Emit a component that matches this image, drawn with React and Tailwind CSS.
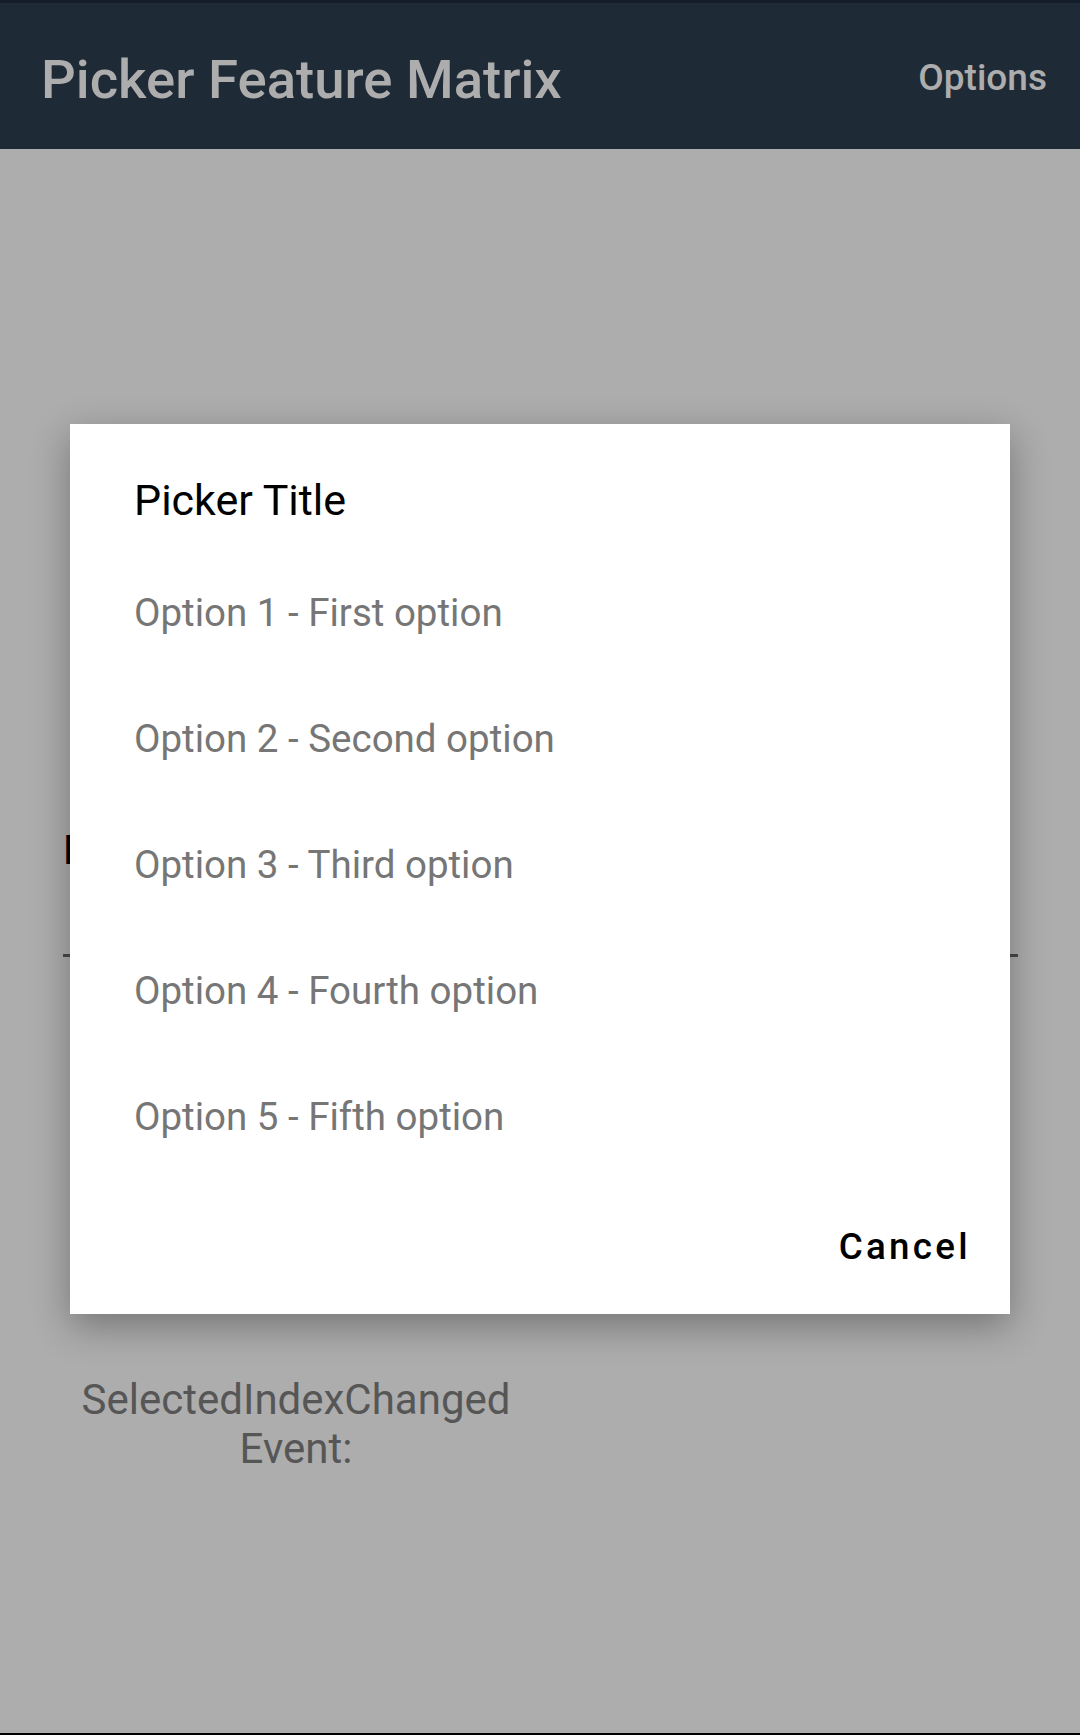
export default function App() {
  const options = [
    "Option 1 - First option",
    "Option 2 - Second option",
    "Option 3 - Third option",
    "Option 4 - Fourth option",
    "Option 5 - Fifth option",
  ];
  return (
    <div
      className="relative flex h-[1735px] w-[1080px] flex-col overflow-hidden bg-[#adadad]"
      style={{ fontFamily: "Roboto, 'Noto Sans', sans-serif" }}
    >
      {/* Toolbar (dimmed) */}
      <div className="h-[3px] bg-[#141d29]" />
      <div className="flex h-[146px] items-center justify-between bg-[#1f2a37] pl-[41px] pr-[33px]">
        <div className="pt-[6px] text-[54.5px] font-medium leading-none text-[#adadad]">Picker Feature Matrix</div>
        <div className="pt-[2px] text-[37px] font-medium leading-none text-[#adadad]">Options</div>
      </div>

      {/* Underlying page content (dimmed by overlay) */}
      <div className="flex flex-1 flex-col px-[63px]">
        <div className="mt-[672px] flex h-[60px] items-center text-[40px] leading-none text-black">
          Picker
        </div>
        <div className="mt-[73px] h-[3px] w-[955px] bg-[#4a4a4a]" />
        <div className="mt-[418px] grid w-[955px] grid-cols-[466px_1fr]">
          <div className="text-center text-[42px] leading-[49px] text-[#565656]">
            SelectedIndexChanged
            <br />
            Event:
          </div>
          <div />
        </div>
      </div>
      <div className="h-[2px] bg-black" />

      {/* Dialog over the page */}
      <div className="absolute left-[70px] top-[424px] flex h-[890px] w-[940px] flex-col bg-white shadow-[0_12px_36px_rgba(0,0,0,0.32)]">
        <div className="pl-[64px] pt-[46px]">
          <div className="h-[60px] text-[43px] leading-[60px] text-black">Picker Title</div>
        </div>
        <div className="mt-[20px] flex flex-col">
          {options.map((o) => (
            <div
              key={o}
              className="flex h-[126px] items-center pl-[64px] text-[38.5px] leading-none text-[#767676]"
            >
              {o}
            </div>
          ))}
        </div>
        <div className="flex flex-1 items-center justify-end pr-[39px]">
          <div className="text-[36.75px] font-medium leading-none tracking-[0.09em] text-black">Cancel</div>
        </div>
      </div>
    </div>
  );
}
